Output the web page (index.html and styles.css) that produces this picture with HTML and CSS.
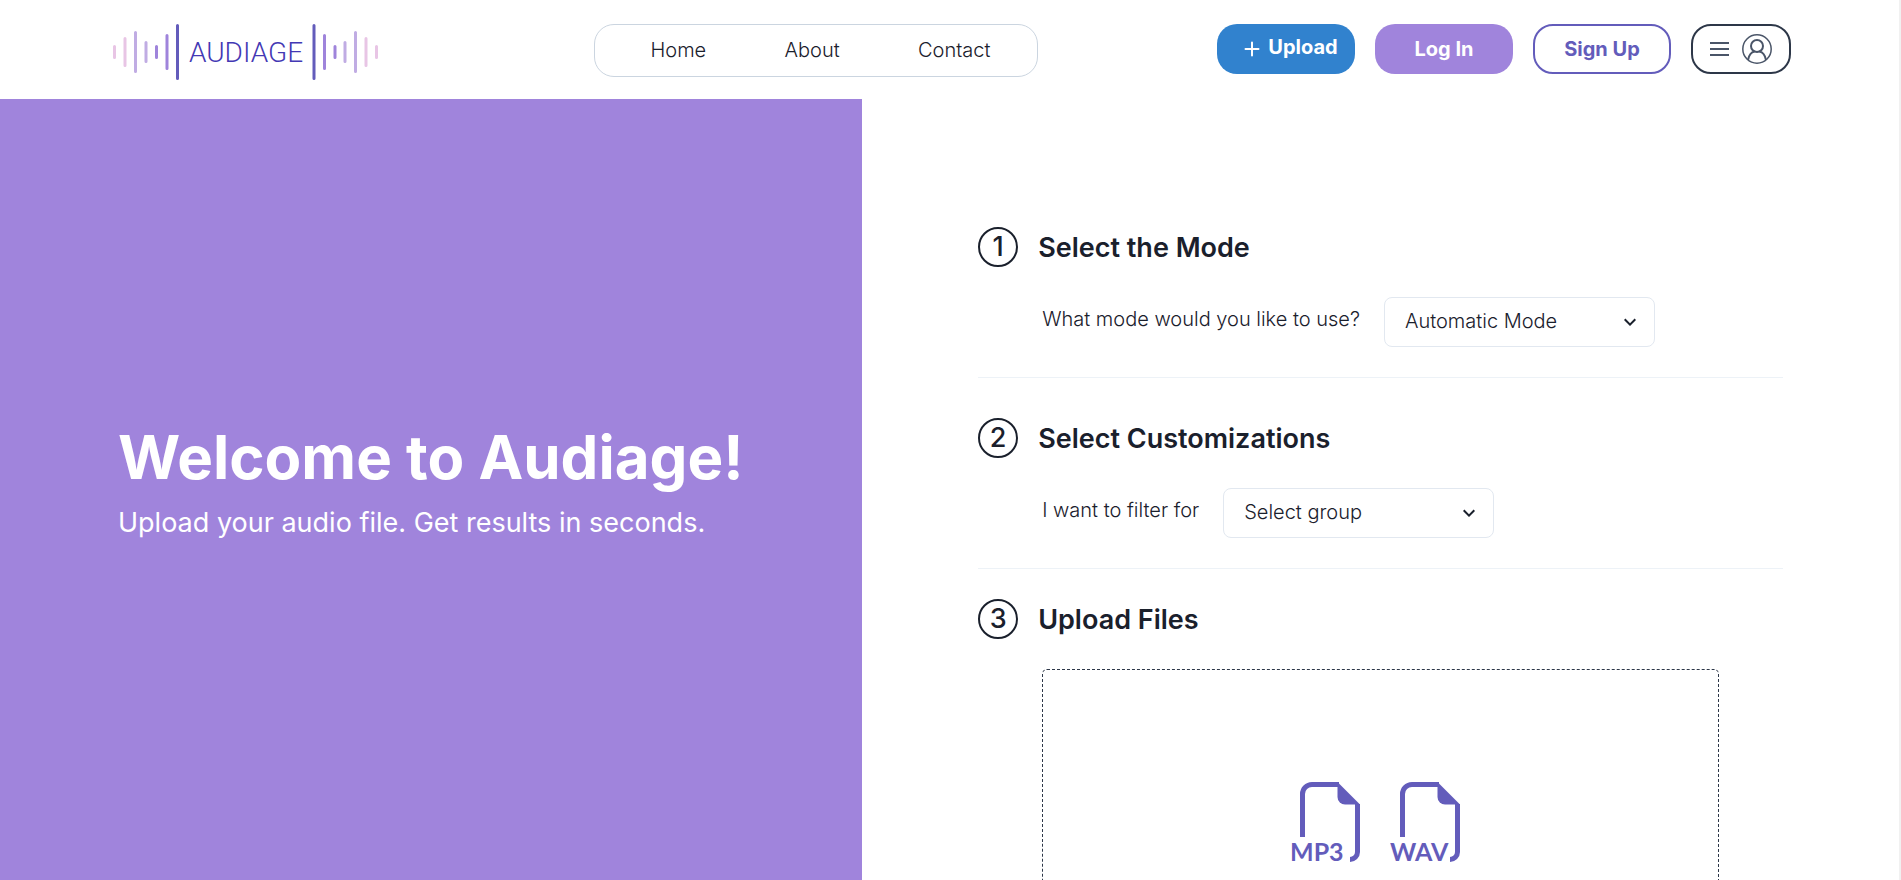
FILE: index.html
```html
<!DOCTYPE html>
<html lang="en">

<head>
    <meta charset="UTF-8">
    <meta name="viewport" content="width=device-width, initial-scale=1.0">
    <title>Audiage</title>
    <link rel="stylesheet" href="styles.css">
</head>

<body>
    <header class="header">
        <a href="#" class="logo" aria-label="Audiage">
            <svg width="268" height="60" viewBox="0 0 268 60" fill="none" stroke-width="3" stroke-linecap="round">
                <g stroke="#e8c5e5">
                    <path d="M2.500 26.500v11M13 18.500v27M254 18.500v27M264.500 26.500v11" />
                </g>
                <g stroke="#c0ace3">
                    <path d="M23.500 12.500v39M34 22.500v19M233 22.500v19M243.500 12.500v39" />
                </g>
                <g stroke="#9f84db">
                    <path d="M44.500 26.500v11M55 15.500v33M212.500 15.500v33M223 26.500v11" />
                </g>
                <g stroke="#635cbb">
                    <path d="M65.500 5.500v53M202 5.500v53" />
                </g>
                <text class="logoText" x="134" y="42" text-anchor="middle">AUDIAGE</text>
            </svg>
        </a>
        <nav class="nav">
            <a href="#">Home</a>
            <a href="#">About</a>
            <a href="#">Contact</a>
        </nav>
        <div class="actions">
            <button type="button" class="btn upload">
                <svg width="16" height="16" viewBox="0 0 16 16" stroke="#fff" stroke-width="2" stroke-linecap="round">
                    <path d="M8 1.500v13M1.500 8h13" />
                </svg>
                <span>Upload</span>
            </button>
            <button type="button" class="btn login">Log In</button>
            <button type="button" class="btn signup">Sign Up</button>
            <button type="button" class="btn menu" aria-label="Menu">
                <svg width="20" height="16" viewBox="0 0 20 16" stroke="#4a5568" stroke-width="2">
                    <path d="M0 2h19M0 8h19M0 14h19" />
                </svg>
                <svg width="30" height="30" viewBox="0 0 30 30" fill="none" stroke="#4a5568">
                    <circle cx="15" cy="15" r="14.200" stroke-width="1.500" />
                    <circle cx="15" cy="12" r="6" stroke-width="2" />
                    <path d="M6 26c1-5 4-8 6.500-8.500M24 26c-1-5-4-8-6.500-8.500" stroke-width="2" />
                </svg>
            </button>
        </div>
    </header>

    <main class="main">
        <section class="welcome">
            <h1>Welcome to Audiage!</h1>
            <p>Upload your audio file. Get results in seconds.</p>
        </section>

        <section class="steps">
            <div class="step">
                <div class="stepHead">
                    <span class="num">1</span>
                    <h2>Select the Mode</h2>
                </div>
                <div class="field">
                    <label for="mode">What mode would you like to use?</label>
                    <div class="selectBox">
                        <select id="mode">
                            <option>Automatic Mode</option>
                            <option>Manual Mode</option>
                        </select>
                        <svg class="arrow" width="24" height="24" viewBox="0 0 24 24" fill="#1a202c">
                            <path d="M16.590 8.590L12 13.170 7.410 8.590 6 10l6 6 6-6z" />
                        </svg>
                    </div>
                </div>
            </div>

            <div class="step">
                <div class="stepHead">
                    <span class="num">2</span>
                    <h2>Select Customizations</h2>
                </div>
                <div class="field">
                    <label for="group">I want to filter for</label>
                    <div class="selectBox">
                        <select id="group">
                            <option>Select group</option>
                        </select>
                        <svg class="arrow" width="24" height="24" viewBox="0 0 24 24" fill="#1a202c">
                            <path d="M16.590 8.590L12 13.170 7.410 8.590 6 10l6 6 6-6z" />
                        </svg>
                    </div>
                </div>
            </div>

            <div class="step last">
                <div class="stepHead">
                    <span class="num">3</span>
                    <h2>Upload Files</h2>
                </div>
                <div class="dropZone">
                    <svg width="80" height="80" viewBox="0 0 80 80">
                        <path d="M12.500 55V12a9.500 9.500 0 0 1 9.500-9.500h27M67.500 22v48a7.500 7.500 0 0 1-7.500 7.500" fill="none" stroke="#635cbb" stroke-width="5" />
                        <path d="M47.500 0L70 22.500H55a7.500 7.500 0 0 1-7.500-7.500z" fill="#635cbb" />
                        <text class="fileType" x="0" y="79">MP3</text>
                    </svg>
                    <svg width="80" height="80" viewBox="0 0 80 80">
                        <path d="M12.500 55V12a9.500 9.500 0 0 1 9.500-9.500h27M67.500 22v48a7.500 7.500 0 0 1-7.500 7.500" fill="none" stroke="#635cbb" stroke-width="5" />
                        <path d="M47.500 0L70 22.500H55a7.500 7.500 0 0 1-7.500-7.500z" fill="#635cbb" />
                        <text class="fileType" x="0" y="79">WAV</text>
                    </svg>
                </div>
            </div>
        </section>
    </main>
</body>

</html>
```

FILE: styles.css
```css
* {
    margin: 0;
    padding: 0;
    box-sizing: border-box;
}

body {
    display: flex;
    flex-direction: column;
    height: 100vh;
    overflow: hidden;
    border-right: 2px solid #f1f1f1;
    background-color: #fff;
    color: #1a202c;
    font-family: Inter, sans-serif;
    font-size: 20px;
}

.header {
    display: flex;
    flex-shrink: 0;
    justify-content: space-between;
    align-items: flex-start;
    height: 99px;
    padding: 24px 108px 0 112px;
}

.logo {
    width: 302px;
    height: 60px;
    margin-top: -4px;
}

.logoText {
    fill: #4338b4;
    stroke: none;
    font-family: Roboto, sans-serif;
    font-size: 28px;
    font-weight: 300;
}

.nav {
    display: flex;
    justify-content: space-between;
    align-items: center;
    width: 444px;
    height: 53px;
    padding: 0 46px 2px 56px;
    border: 1px solid #cbd5e0;
    border-radius: 20px;
}

.nav a {
    color: #1a202c;
    font-weight: 300;
    text-decoration: none;
}

.actions {
    display: flex;
    gap: 20px;
}

.btn {
    display: flex;
    justify-content: center;
    align-items: center;
    width: 138px;
    height: 50px;
    border: none;
    border-radius: 20px;
    background-color: #fff;
    font-family: inherit;
    font-size: 20px;
    font-weight: 700;
    cursor: pointer;
}

.upload {
    gap: 8px;
    padding-left: 10px;
    background-color: #3182ce;
    color: #fff;
}

.upload span {
    padding-bottom: 4px;
}

.login {
    background-color: #a084dc;
    color: #fff;
}

.signup {
    border: 2px solid #635cbb;
    color: #635cbb;
}

.menu {
    gap: 12px;
    width: 100px;
    border: 2px solid #2d3748;
}

.main {
    display: flex;
    flex: 1;
    min-height: 0;
}

.welcome {
    display: flex;
    flex-direction: column;
    justify-content: center;
    width: 45.4%;
    padding: 0 0 6px 118px;
    background-color: #a084dc;
    color: #fff;
}

.welcome h1 {
    font-size: 60px;
    font-weight: 700;
    line-height: 72px;
}

.welcome p {
    font-size: 27px;
    line-height: 60px;
}

.steps {
    flex: 1;
    padding: 128px 116px 0;
}

.step {
    margin-bottom: 40px;
    padding-bottom: 30px;
    border-bottom: 1px solid #edf2f7;
}

.step:nth-child(2) {
    margin-bottom: 30px;
}

.step.last {
    border: none;
}

.stepHead {
    display: flex;
    align-items: center;
    gap: 20px;
    margin-bottom: 30px;
}

.num {
    width: 40px;
    height: 40px;
    border: 2px solid #1a202c;
    border-radius: 50%;
    font-size: 27px;
    font-weight: 500;
    line-height: 36px;
    text-align: center;
}

.stepHead h2 {
    font-size: 27px;
    font-weight: 600;
}

.field {
    display: flex;
    gap: 24px;
    padding-left: 64px;
}

.field label {
    font-weight: 300;
    line-height: 44px;
}

.selectBox {
    position: relative;
    width: 271px;
}

.selectBox select {
    width: 100%;
    height: 50px;
    padding: 0 20px 2px;
    border: 1px solid #e2e8f0;
    border-radius: 8px;
    background-color: #fff;
    color: #1a202c;
    font-family: inherit;
    font-size: 20px;
    font-weight: 300;
    appearance: none;
}

.arrow {
    position: absolute;
    top: 13px;
    right: 13px;
    pointer-events: none;
}

.dropZone {
    display: flex;
    justify-content: center;
    gap: 20px;
    height: 350px;
    margin: 0 64px;
    padding: 112px 2px 0 0;
    border: 1px dashed #2d3748;
    border-radius: 5px;
}

.fileType {
    fill: #635cbb;
    font-family: Lato, sans-serif;
    font-size: 25px;
    font-weight: 700;
}
```
